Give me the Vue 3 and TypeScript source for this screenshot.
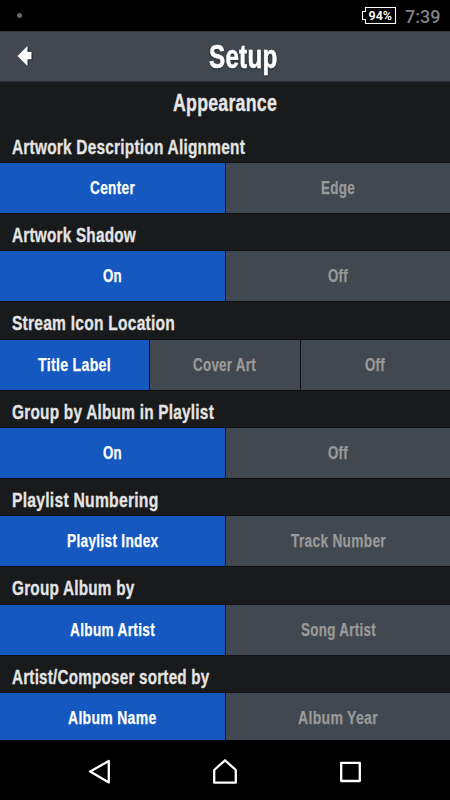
<script setup lang="ts">
interface Choice {
  text: string
  width: number
}

interface Setting {
  label: Choice
  choices: Choice[]
}

// Widths are the condensed line lengths of each text, in pixels.
const settings: Setting[] = [
  {
    label: { text: 'Artwork Description Alignment', width: 233 },
    choices: [{ text: 'Center', width: 45 }, { text: 'Edge', width: 34 }],
  },
  {
    label: { text: 'Artwork Shadow', width: 124 },
    choices: [{ text: 'On', width: 19 }, { text: 'Off', width: 20 }],
  },
  {
    label: { text: 'Stream Icon Location', width: 163 },
    choices: [
      { text: 'Title Label', width: 73 },
      { text: 'Cover Art', width: 63 },
      { text: 'Off', width: 20 },
    ],
  },
  {
    label: { text: 'Group by Album in Playlist', width: 202 },
    choices: [{ text: 'On', width: 19 }, { text: 'Off', width: 20 }],
  },
  {
    label: { text: 'Playlist Numbering', width: 146.5 },
    choices: [{ text: 'Playlist Index', width: 91.5 }, { text: 'Track Number', width: 95 }],
  },
  {
    label: { text: 'Group Album by', width: 122.5 },
    choices: [{ text: 'Album Artist', width: 85 }, { text: 'Song Artist', width: 75 }],
  },
  {
    label: { text: 'Artist/Composer sorted by', width: 197.5 },
    choices: [{ text: 'Album Name', width: 88.5 }, { text: 'Album Year', width: 80 }],
  },
]
</script>

<template>
  <div class="screen">
    <div class="status">
      <span class="dot"></span>
      <svg class="battery" width="36" height="18" viewBox="0 0 36 18">
        <path d="M4.5 1.5H34.5V17.5H4.5V13.5H1.5V5.5H4.5Z" />
        <text x="7.5" y="13.8" textLength="23.5" lengthAdjust="spacingAndGlyphs">94%</text>
      </svg>
      <span class="clock">7:39</span>
    </div>

    <header class="header">
      <svg class="back" width="16" height="20" viewBox="0 0 16 20">
        <path class="back-shadow" d="M1 10L11 0V6H15V14H11V20Z" transform="translate(.6 .6)" />
        <path d="M0.5 10L10.5 0V6H14.5V13.3H10.5V20Z" />
      </svg>
      <svg class="title" width="69" height="49">
        <text x="0" y="36" textLength="68.5" lengthAdjust="spacingAndGlyphs">Setup</text>
      </svg>
    </header>

    <main class="content">
      <div class="section">
        <svg class="heading" width="104" height="44">
          <text x="0" y="29" textLength="104" lengthAdjust="spacingAndGlyphs">Appearance</text>
        </svg>
      </div>
      <section v-for="setting in settings" :key="setting.label.text" class="setting">
        <div class="label">
          <svg :width="setting.label.width" height="38">
            <text x="0" y="28.9" :textLength="setting.label.width" lengthAdjust="spacingAndGlyphs">{{ setting.label.text }}</text>
          </svg>
        </div>
        <div class="choices" :class="{ triple: setting.choices.length === 3 }">
          <div
            v-for="(choice, index) in setting.choices"
            :key="choice.text"
            class="choice"
            :class="{ selected: index === 0 }"
          >
            <svg :width="choice.width" height="50">
              <text x="0" y="31" :textLength="choice.width" lengthAdjust="spacingAndGlyphs">{{ choice.text }}</text>
            </svg>
          </div>
        </div>
      </section>
    </main>

    <nav class="nav">
      <svg width="24" height="26" viewBox="0 0 24 26"><path d="M3.2 13.6L21.8 3V24.4Z" /></svg>
      <svg width="26" height="26" viewBox="0 0 26 26"><path d="M2.2 12L13 2.3L23.8 12V24.7H2.2Z" /></svg>
      <svg width="24" height="26" viewBox="0 0 24 26"><path d="M2.2 4.8H20.8V23H2.2Z" /></svg>
    </nav>
  </div>
</template>

<style>
body {
  background: #000;
}
</style>

<style scoped>
.screen {
  width: 450px;
  height: 800px;
  display: flex;
  flex-direction: column;
  overflow: hidden;
  background: #000;
  font-family: "Liberation Sans Narrow", "Liberation Sans", sans-serif;
  font-weight: 700;
}
svg {
  display: block;
  overflow: visible;
  flex: none;
}
.status {
  height: 31px;
  flex: none;
  display: flex;
  align-items: center;
  padding: 0 10px 0 17px;
}
.dot {
  width: 5px;
  height: 5px;
  margin-bottom: 1px;
  border-radius: 50%;
  background: #686868;
}
.battery {
  margin: 0 0 1px auto;
}
.battery path {
  fill: none;
  stroke: #fff;
  stroke-width: 1.1;
}
.battery text {
  fill: #fff;
  font: 600 13.5px Roboto, sans-serif;
}
.clock {
  margin-left: 8px;
  width: 35px;
  color: #828282;
  font: 500 18px/31px Roboto, sans-serif;
  padding-top: 2px;
}
.header {
  height: 51px;
  box-sizing: border-box;
  flex: none;
  display: grid;
  grid-template-columns: 40px 1fr 40px;
  background: #42484f;
  border-top: 1px solid #363b41;
  border-bottom: 1px solid #2c3034;
}
.back {
  margin: 14px 0 0 17px;
  fill: #fff;
}
.back-shadow {
  fill: #242b35;
}
.title {
  margin-left: 169px;
  fill: #fff;
  font-size: 34px;
  letter-spacing: 0.3px;
  stroke: #fff;
  stroke-width: 0.6px;
  filter: drop-shadow(0 1px 1px #252b33);
}
.content {
  height: 658px;
  flex: none;
  overflow: hidden;
  background: #191a1b;
}
.section {
  height: 42.7px;
  display: flex;
  justify-content: center;
}
.heading {
  fill: #e6e6e6;
  font-size: 23.5px;
  letter-spacing: 0.3px;
  stroke: #e6e6e6;
  stroke-width: 0.35px;
}
.setting {
  height: 88.33px;
}
.label {
  height: 38.33px;
  padding-left: 12px;
  fill: #e4e4e4;
  font-size: 20.5px;
  letter-spacing: 0.3px;
  stroke: #e4e4e4;
  stroke-width: 0.3px;
}
.choices {
  height: 50px;
  display: grid;
  grid-auto-flow: column;
  grid-auto-columns: minmax(0, 1fr);
  background: #101214;
  box-shadow: 0 -1px #111213, 0 1px #101112;
}
.choices.triple {
  gap: 1px;
}
.choice {
  display: flex;
  justify-content: center;
  box-sizing: border-box;
  background: #42484f;
  fill: #9a9a9a;
  font-size: 18px;
  letter-spacing: 0.4px;
  stroke: #9a9a9a;
  stroke-width: 0.25px;
}
.choices:not(.triple) .choice + .choice {
  border-left: 1px solid #101214;
}
.choice.selected {
  background: #1458c0;
  fill: #fff;
  stroke: #fff;
}
.nav {
  flex: 1;
  display: flex;
  justify-content: center;
  gap: 101px;
  padding-top: 18px;
}
.nav path {
  fill: none;
  stroke: #fff;
  stroke-width: 2.3;
  stroke-linejoin: round;
}
</style>
